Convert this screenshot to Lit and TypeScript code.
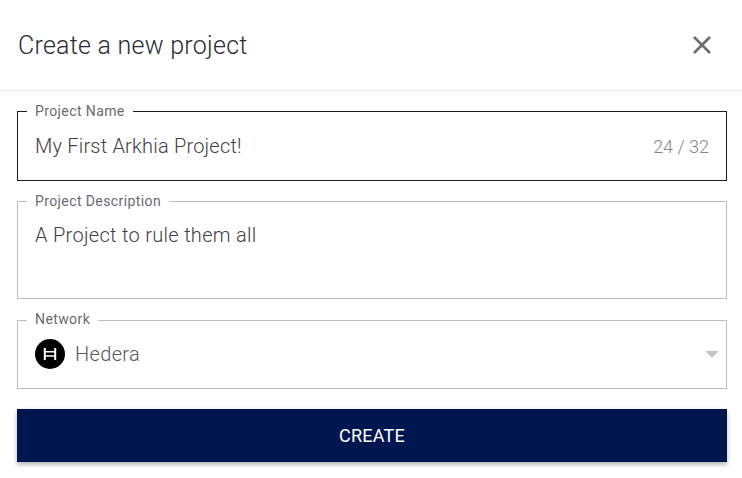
import { LitElement, html, css } from "lit";
import { customElement } from "lit/decorators.js";

@customElement("app-root")
export class AppRoot extends LitElement {
  static styles = css`
    :host {
      display: block;
      width: 742px;
      height: 478px;
      background: #fff;
      font-family: "Roboto", "Liberation Sans", sans-serif;
      overflow: hidden;
    }
    .header {
      height: 90px;
      border-bottom: 1px solid #e6e6f2;
      display: flex;
      align-items: center;
      justify-content: space-between;
      padding: 0 30px 0 18px;
    }
    h1 {
      margin: 0;
      font-size: 25px;
      font-weight: 300;
      color: #2a2b33;
      letter-spacing: 0.25px;
    }
    .close { display: block; }
    .form {
      display: flex;
      flex-direction: column;
      padding: 11px 15px 0 17px;
    }
    fieldset {
      margin: 0;
      padding: 0 17px;
      border: 1px solid #bdbdbd;
      box-sizing: border-box;
      min-width: 0;
    }
    legend {
      margin-left: -8px;
      padding: 0 8px 0 8px;
      font-size: 14px;
      line-height: 18px;
      color: #6a6a72;
      letter-spacing: 0.4px;
    }
    .value {
      font-size: 20px;
      font-weight: 300;
      color: #3f4048;
      letter-spacing: 0.2px;
    }
    .name { border-color: #1a1a1f; height: 79px; }
    .name .row {
      display: flex;
      align-items: center;
      justify-content: space-between;
      height: 52px;
    }
    .count { font-size: 18px; font-weight: 300; color: #85858c; }
    .desc { height: 107px; margin-top: 11px; }
    .desc .value { line-height: 26px; margin-top: 12px; letter-spacing: 0.3px; }
    .network { height: 79px; margin-top: 11px; }
    .network legend { padding-bottom: 2px; }
    .network .row {
      display: flex;
      align-items: center;
      gap: 10px;
      height: 32px;
      margin-top: 8px;
    }
    .network .value { color: #55565e; font-size: 20px; letter-spacing: 0.35px; }
    .logo { display: block; flex: none; }
    .caret {
      margin-left: auto;
      margin-right: -10px;
      width: 0;
      height: 0;
      border-left: 7px solid transparent;
      border-right: 7px solid transparent;
      border-top: 7px solid #c4c4c4;
    }
    button {
      margin-top: 20px;
      height: 53px;
      border: 0;
      border-radius: 0;
      padding: 0;
      background: #00164e;
      color: #fff;
      font: 400 18px "Roboto", "Liberation Sans", sans-serif;
      letter-spacing: 0.2px;
      box-shadow: 0 3px 4px rgba(0, 0, 0, 0.22), 0 1px 6px rgba(0, 0, 0, 0.1);
    }
  `;

  render() {
    return html`
      <div class="header">
        <h1>Create a new project</h1>
        <svg class="close" width="20" height="20" viewBox="0 0 20 20" fill="none" stroke="#6b6c76" stroke-width="2.6">
          <path d="M2 2 L18 18 M18 2 L2 18" />
        </svg>
      </div>
      <div class="form">
        <fieldset class="name">
          <legend>Project Name</legend>
          <div class="row">
            <span class="value">My First Arkhia Project!</span>
            <span class="count">24 / 32</span>
          </div>
        </fieldset>
        <fieldset class="desc">
          <legend>Project Description</legend>
          <div class="value">A Project to rule them all</div>
        </fieldset>
        <fieldset class="network">
          <legend>Network</legend>
          <div class="row">
            <svg class="logo" width="30" height="30" viewBox="0 0 30 30">
              <circle cx="15" cy="15" r="15" fill="#000" />
              <path d="M9.8 9V21M20.2 9V21" stroke="#fff" stroke-width="2" fill="none" />
              <path d="M10 12.8H20M10 17H20" stroke="#fff" stroke-width="1.5" fill="none" />
            </svg>
            <span class="value">Hedera</span>
            <span class="caret"></span>
          </div>
        </fieldset>
        <button>CREATE</button>
      </div>
    `;
  }
}
